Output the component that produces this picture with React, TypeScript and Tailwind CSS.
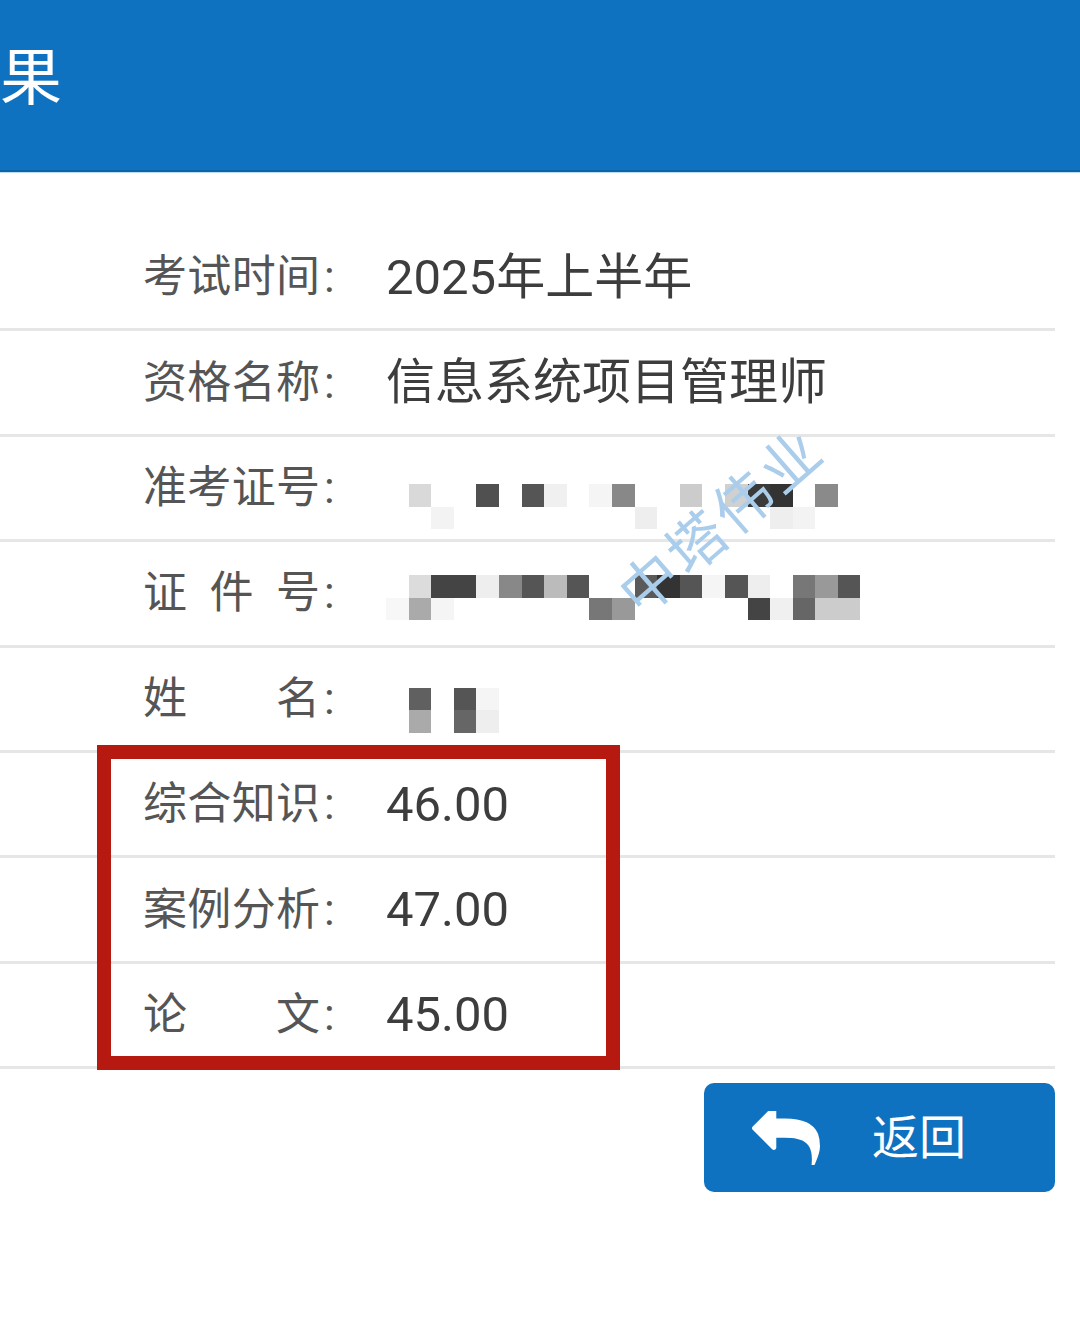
import React from 'react';

type Row = {
  id: string;
  label: string[];
  value?: string;
  mosaic?: { top: Record<number, string>; bottom: Record<number, string>; offset: string };
};

// pixelated (blurred) private data, column index -> cell colour
const ticketMosaic = {
  top: { 1: '#d9d9d9', 4: '#505050', 6: '#555555', 7: '#f0f0f0', 9: '#f5f5f5', 10: '#888888', 13: '#cccccc', 15: '#d0d0d0', 16: '#3a3a3a', 17: '#333333', 19: '#8a8a8a' },
  bottom: { 2: '#f3f3f3', 11: '#eeeeee', 17: '#eeeeee', 18: '#f3f3f3' },
  offset: 'mt-[38px]',
};

const idMosaic = {
  top: { 1: '#dcdcdc', 2: '#444444', 3: '#444444', 4: '#eeeeee', 5: '#888888', 6: '#555555', 7: '#bbbbbb', 8: '#555555', 11: '#5a5a5a', 12: '#333333', 13: '#555555', 14: '#f5f5f5', 15: '#555555', 16: '#eeeeee', 18: '#777777', 19: '#999999', 20: '#555555' },
  bottom: { 0: '#f7f7f7', 1: '#aaaaaa', 2: '#f5f5f5', 9: '#777777', 10: '#999999', 16: '#444444', 17: '#f0f0f0', 18: '#666666', 19: '#cccccc', 20: '#cccccc' },
  offset: 'mt-[9px]',
};

const nameMosaic = {
  top: { 1: '#606060', 3: '#555555', 4: '#f5f5f5' },
  bottom: { 1: '#aaaaaa', 3: '#666666', 4: '#eeeeee' },
  offset: 'mt-[23px]',
};

const rows: Row[] = [
  { id: 'time', label: ['考', '试', '时', '间'], value: '2025年上半年' },
  { id: 'cert', label: ['资', '格', '名', '称'], value: '信息系统项目管理师' },
  { id: 'ticket', label: ['准', '考', '证', '号'], mosaic: ticketMosaic },
  { id: 'idno', label: ['证', '件', '号'], mosaic: idMosaic },
  { id: 'name', label: ['姓', '名'], mosaic: nameMosaic },
  { id: 's1', label: ['综', '合', '知', '识'], value: '46.00' },
  { id: 's2', label: ['案', '例', '分', '析'], value: '47.00' },
  { id: 's3', label: ['论', '文'], value: '45.00' },
];

const COLS = Array.from({ length: 21 }, (_, i) => i);

const Mosaic: React.FC<{ data: NonNullable<Row['mosaic']> }> = ({ data }) => (
  <div className={`flex flex-col ${data.offset}`}>
    {[data.top, data.bottom].map((line, li) => (
      <div key={li} className="flex">
        {COLS.map((c) => (
          <div
            key={c}
            className="w-[22.6px] h-[22.5px]"
            style={{ backgroundColor: line[c] ?? 'transparent' }}
          />
        ))}
      </div>
    ))}
  </div>
);

// old-style "reply" arrow
const ReplyIcon = () => (
  <svg viewBox="0 190 1792 1420" width="68" height="54" fill="currentColor">
    <path d="M1792 1120q0 166-127 451-3 7-10.5 24t-13.5 30-13 22q-12 17-28 17-15 0-23.5-10t-8.5-25q0-9 2.5-26.5t2.5-23.5q5-68 5-123 0-101-17.5-181t-48.5-138.5-80-101-105.5-69.5-133-42.5-154-21.5-175.5-6h-224v256q0 26-19 45t-45 19-45-19l-512-512q-19-19-19-45t19-45l512-512q19-19 45-19t45 19 19 45v256h224q713 0 875 403 53 134 53 333z" />
  </svg>
);

export default function App() {
  return (
    <div className="relative w-[1080px] min-h-[1327px] bg-white font-[Roboto,'Noto_Sans_CJK_SC',sans-serif] overflow-hidden">
      {/* header */}
      <div className="h-[170px] bg-[#0f72c0] flex items-center pb-[12px]">
        <span className="text-[62px] leading-none text-white">果</span>
      </div>
      <div className="h-[2px] bg-[#0d63a8]" />
      <div className="h-px bg-[#bcdcf4]" />

      {/* info rows */}
      <div className="pt-[53px] pr-[25px]">
        {rows.map((row) => (
          <div key={row.id}>
            <div className="h-[102.4px] flex items-center pl-[143px]">
              <div className="w-[243px] flex items-center text-[44px] leading-none text-[#555555]">
                <div className="w-[177px] flex justify-between">
                  {row.label.map((ch, i) => (
                    <span key={i}>{ch}</span>
                  ))}
                </div>
                <span className="ml-[4px]">:</span>
              </div>
              {row.value && (
                <span className="text-[49px] leading-none text-[#3d3d3d]">{row.value}</span>
              )}
              {row.mosaic && <Mosaic data={row.mosaic} />}
            </div>
            <div className="h-[3px] bg-[#e6e6e6]" />
          </div>
        ))}

        {/* back button */}
        <div className="flex justify-end mt-[14px]">
          <button className="w-[351px] h-[109px] rounded-[10px] bg-[#0f72c0] flex items-center pl-[48px] text-white">
            <ReplyIcon />
            <span className="ml-[52px] text-[47px] leading-none">返回</span>
          </button>
        </div>
      </div>

      {/* highlight box over the scores */}
      <div className="absolute left-[97px] top-[745px] w-[523px] h-[325px] border-[14px] border-[#b5190f]" />

      {/* watermark */}
      <div className="absolute left-[592px] top-[490px] w-[260px] h-[64px] flex items-center justify-center -rotate-[41deg] text-[58px] leading-none tracking-[4px] text-[#abcdec] pointer-events-none">
        中塔伟业
      </div>
    </div>
  );
}
